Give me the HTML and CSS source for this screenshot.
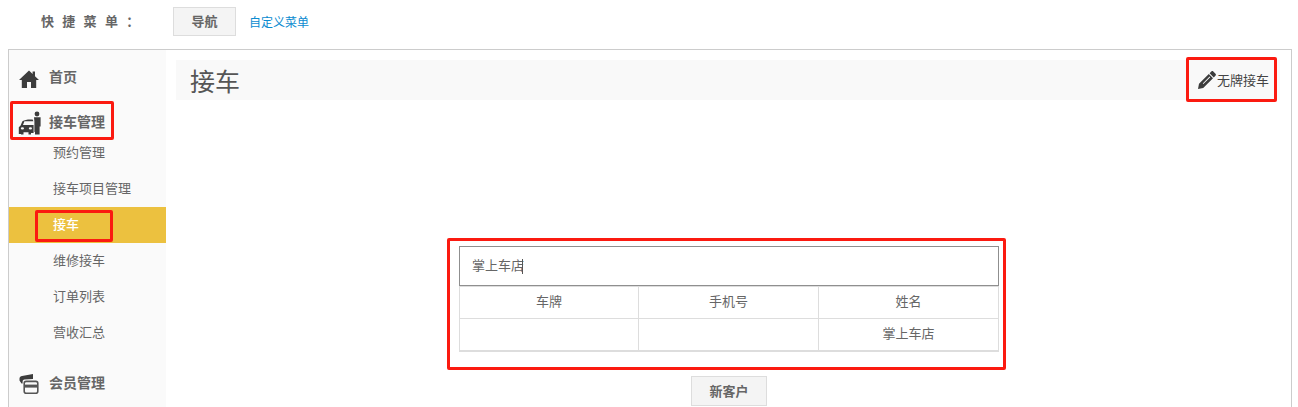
FILE: index.html
```html
<!DOCTYPE html>
<html lang="zh">
<head>
<meta charset="utf-8">
<title>接车</title>
<link rel="stylesheet" href="styles.css">
</head>
<body>
<header class="topbar">
  <span class="quick-label">快捷菜单：</span>
  <a class="btn quick-btn"><span class="btn-text">导航</span></a>
  <a class="quick-link">自定义菜单</a>
</header>
<div class="frame">
  <nav class="sidebar">
    <div class="nav-head nav-home">
      <svg class="nav-icon" viewBox="0 0 20 18"><path d="M10 0.5 L13.6 3.9 V1.6 H16 V6.2 L20 10 H17.2 V18 H12 V12 H8 V18 H2.8 V10 H0 Z" fill="#3c3c3c"/></svg>
      <span class="nav-text">首页</span>
    </div>
    <div class="nav-head nav-car">
      <svg class="nav-icon" viewBox="0 0 24 24"><g fill="#3c3c3c"><circle cx="19" cy="3" r="2.4"/><path d="M16 6.2 H22.6 V15.5 H21.6 V23.5 H17 V21 H16.4 V10.5 Z"/><path d="M0.8 23 V16.2 L2.6 14.6 L4.4 10.2 C7 8.6 11 8.2 14.6 8.6 L15.4 10.2 H6.4 L5 14 H15.6 V22 H13 V23.5 H10.5 V21.2 H5.5 V23.5 H3 V23 Z"/></g><ellipse cx="4.4" cy="17.4" rx="1.6" ry="1.1" fill="#fafafa"/><ellipse cx="12.4" cy="17.4" rx="1.6" ry="1.1" fill="#fafafa"/></svg>
      <span class="nav-text">接车管理</span>
    </div>
    <ul class="subnav">
      <li>预约管理</li>
      <li>接车项目管理</li>
      <li class="active">接车</li>
      <li>维修接车</li>
      <li>订单列表</li>
      <li>营收汇总</li>
    </ul>
    <div class="nav-head nav-member">
      <svg class="nav-icon" viewBox="0 0 20 20"><path d="M0.5 4.4 C0.5 2.8 1.8 2.4 3 2 L14 0 V5 L5.5 5.6 C4.2 5.7 3.6 6.4 3.6 8 V9.6 H2.5 L0.5 6.4 Z" fill="#3c3c3c"/><rect x="5.2" y="7.4" width="13.6" height="11.8" rx="2" fill="#fafafa" stroke="#555" stroke-width="1.6"/><rect x="5" y="10.6" width="14" height="3" fill="#555"/></svg>
      <span class="nav-text">会员管理</span>
    </div>
  </nav>
  <main class="content">
    <div class="page-head">
      <h1>接车</h1>
      <a class="plate-link">
        <svg class="pencil" viewBox="0 0 18 18"><path d="M13.4 0.4 C14 -0.1 14.8 0 15.3 0.5 L17.5 2.7 C18 3.2 18.1 4 17.6 4.6 L15.8 6.4 L11.6 2.2 Z M10.8 3 L15 7.2 L5.2 17 L0 18 L1 12.8 Z" fill="#3c3c3c"/><path d="M11.6 5.6 L12.2 6.2 L5.4 13 L4.8 12.4 Z" fill="#fff"/></svg>
        <span class="plate-text">无牌接车</span>
      </a>
    </div>
    <section class="search">
      <div class="search-input"><span class="input-text">掌上车店</span><i class="caret"></i></div>
      <div class="result">
        <div class="cell">车牌</div>
        <div class="cell">手机号</div>
        <div class="cell">姓名</div>
        <div class="cell"></div>
        <div class="cell"></div>
        <div class="cell">掌上车店</div>
      </div>
      <a class="btn new-btn">新客户</a>
    </section>
  </main>
</div>
<div class="mark mark-car"></div>
<div class="mark mark-active"></div>
<div class="mark mark-plate"></div>
<div class="mark mark-search"></div>
</body>
</html>
```
FILE: styles.css
```css
html, body {
  margin: 0;
  padding: 0;
  height: 407px;
  overflow: hidden;
  background: #fff;
}
body {
  position: relative;
  font-family: "Noto Sans CJK SC", "Noto Sans", sans-serif;
  font-size: 13px;
  color: #666;
}
.topbar {
  display: flex;
  align-items: center;
  height: 43px;
  padding-left: 41px;
}
.quick-label {
  width: 132px;
  padding-bottom: 2px;
  font-weight: 700;
  letter-spacing: 8.3px;
  color: #666;
  white-space: nowrap;
}
.btn {
  display: flex;
  align-items: center;
  justify-content: center;
  box-sizing: border-box;
  padding-bottom: 2px;
  background: #f4f4f4;
  border: 1px solid #ddd;
  font-weight: 700;
  color: #666;
}
.quick-btn {
  width: 63px;
  height: 29px;
}
.quick-link {
  margin-left: 13px;
  padding-bottom: 1px;
  font-size: 12px;
  color: #0b8bd0;
}
.frame {
  display: flex;
  box-sizing: border-box;
  width: 1284px;
  height: 370px;
  margin: 6px 0 0 8px;
  border: 1px solid #ccc;
  border-bottom: 0;
}
.sidebar {
  flex: none;
  width: 157px;
  background: #fafafa;
}
.nav-head {
  display: flex;
  align-items: center;
  height: 24px;
  padding-left: 9px;
  font-size: 14px;
  font-weight: 700;
  color: #666;
}
.nav-text {
  padding-bottom: 4px;
}
.nav-icon {
  flex: none;
  width: 22px;
  height: 22px;
  margin-right: 9px;
}
.nav-home { margin-top: 16px; }
.nav-home .nav-icon { width: 20px; height: 18px; margin: 2px 10px 0 1px; }
.nav-car { margin-top: 21px; }
.nav-car .nav-icon { width: 24px; height: 24px; margin-right: 7px; }
.nav-member { margin-top: 21px; }
.nav-member .nav-icon { width: 20px; height: 20px; margin: 0 10px 0 1px; }
.subnav {
  list-style: none;
  margin: 0;
  padding: 0;
}
.subnav li {
  height: 36px;
  line-height: 34px;
  padding-left: 44px;
  color: #666;
}
.subnav .active {
  background: #ecc13f;
  color: #fff;
  font-weight: 500;
}
.content {
  flex: 1;
  min-width: 0;
  padding: 10px 11px 0 10px;
}
.page-head {
  display: flex;
  align-items: center;
  justify-content: space-between;
  height: 40px;
  padding: 0 11px 0 14px;
  background: #f9f9f9;
}
h1 {
  margin: 0;
  font-size: 25px;
  font-weight: 400;
  color: #555;
}
.plate-link {
  display: flex;
  align-items: center;
  color: #444;
}
.plate-text {
  padding-bottom: 2px;
}
.pencil {
  width: 18px;
  height: 18px;
  margin-right: 1px;
}
.search {
  display: flex;
  flex-direction: column;
  align-items: center;
  width: 540px;
  margin: 146px 0 0 283px;
}
.search-input {
  display: flex;
  align-items: center;
  box-sizing: border-box;
  width: 100%;
  height: 40px;
  padding-left: 12px;
  border: 1px solid #8f8f8f;
}
.input-text {
  padding-bottom: 4px;
}
.caret {
  width: 1px;
  height: 15px;
  margin-left: -2px;
  background: #555;
}
.result {
  display: grid;
  grid-template-columns: 179px 180px 1fr;
  grid-template-rows: 32px 31px;
  box-sizing: border-box;
  width: 100%;
  border-top: 1px solid #ddd;
  border-left: 1px solid #ddd;
  border-right: 1px solid #ddd;
  border-bottom: 2px solid #ddd;
}
.cell {
  display: flex;
  align-items: center;
  justify-content: center;
  box-sizing: border-box;
  padding-bottom: 4px;
  border-bottom: 1px solid #ddd;
  border-right: 1px solid #ddd;
}
.cell:nth-child(3n) { border-right: 0; }
.cell:nth-child(n+4) { border-bottom: 0; }
.new-btn {
  width: 76px;
  height: 30px;
  margin-top: 24px;
}
.mark {
  position: absolute;
  box-sizing: border-box;
  border: 3px solid #fb1a10;
  border-radius: 2px;
}
.mark-car { left: 10px; top: 101px; width: 104px; height: 39px; }
.mark-active { left: 35px; top: 210px; width: 78px; height: 32px; }
.mark-plate { left: 1186px; top: 57px; width: 91px; height: 45px; }
.mark-search { left: 447px; top: 238px; width: 559px; height: 132px; }
```
